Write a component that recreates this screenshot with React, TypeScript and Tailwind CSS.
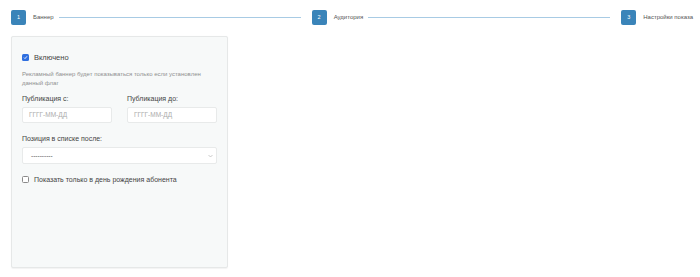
import React from 'react';

const steps = ['Баннер', 'Аудитория', 'Настройки показа'];

function Step({ n, label, last }: { n: number; label: string; last?: boolean }) {
  return (
    <>
      <div className="flex h-[15px] w-[15px] shrink-0 items-center justify-center rounded-[2px] bg-[#3a84b9] text-[5.5px] text-white">
        {n}
      </div>
      <span className="ml-[7px] whitespace-nowrap text-[6px] text-[#555]">{label}</span>
      {!last && <div className="ml-[5px] mr-[11px] h-[1.5px] flex-1 bg-[#a8cbe4]" />}
    </>
  );
}

function Check({ checked }: { checked?: boolean }) {
  if (checked) {
    return (
      <span className="flex h-[7px] w-[7px] shrink-0 items-center justify-center rounded-[1.5px] bg-[#2f6fdf]">
        <svg width="5" height="5" viewBox="0 0 10 10">
          <path d="M2 5.2l2 2 4-4.6" fill="none" stroke="white" strokeWidth="1.8" />
        </svg>
      </span>
    );
  }
  return <span className="h-[7px] w-[7px] shrink-0 rounded-[1.5px] border border-[#8a8a8a] bg-white" />;
}

function DateField({ label }: { label: string }) {
  return (
    <div className="flex w-[90px] flex-col">
      <span className="mt-[6px] text-[7px] leading-[9px] text-[#444]">{label}</span>
      <div className="mt-[4px] flex h-[16px] items-center rounded-[2px] border border-[#e8eaea] bg-white pl-[6px] text-[6.5px] text-[#ababab]">
        ГГГГ-ММ-ДД
      </div>
    </div>
  );
}

export default function App() {
  return (
    <div className="h-[277px] w-[700px] overflow-hidden bg-white font-['Liberation_Sans',Arial,sans-serif]">
      <div className="flex items-center pl-[11px] pr-[7px] pt-[10px]">
        {steps.map((s, i) => (
          <Step key={s} n={i + 1} label={s} last={i === steps.length - 1} />
        ))}
      </div>
      <div className="ml-[11px] mt-[11px] h-[232px] w-[217px] rounded-[2px] border border-[#e6e8e8] bg-[#f7f9f9] px-[10px] pt-[16px] shadow-[0_0.5px_1px_rgba(0,0,0,0.05)]">
        <div className="flex items-center gap-[5px] text-[7.5px] leading-[9px] text-[#444]">
          <Check checked />
          <span>Включено</span>
        </div>
        <p className="mt-[8px] text-[6px] leading-[9px] text-[#909090]">
          Рекламный баннер будет показываться только если установлен данный флаг
        </p>
        <div className="flex justify-between">
          <DateField label="Публикация с:" />
          <DateField label="Публикация до:" />
        </div>
        <div className="mt-[11px] text-[7px] leading-[9px] text-[#444]">Позиция в списке после:</div>
        <div className="mt-[4px] flex h-[17px] items-center justify-between rounded-[2px] border border-[#e8eaea] bg-white pl-[8px] pr-[3px] text-[6.5px] text-[#555]">
          <span>----------</span>
          <svg width="5" height="4" viewBox="0 0 10 6">
            <path d="M1 1l4 4 4-4" fill="none" stroke="#aaa" strokeWidth="1.2" />
          </svg>
        </div>
        <div className="mt-[11px] flex items-center gap-[5px] text-[7px] leading-[9px] text-[#444]">
          <Check />
          <span>Показать только в день рождения абонента</span>
        </div>
      </div>
    </div>
  );
}
